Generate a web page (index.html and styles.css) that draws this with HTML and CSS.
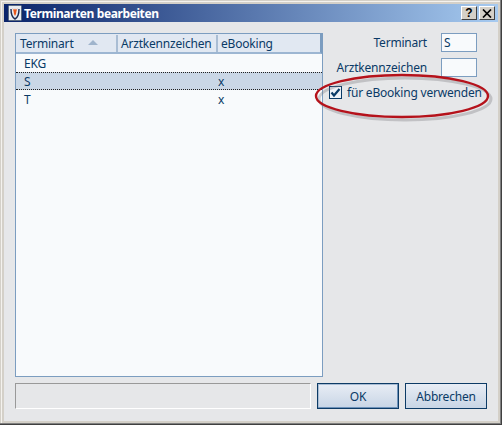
FILE: index.html
```html
<!DOCTYPE html>
<html>

<head>
    <meta charset="UTF-8">
    <title>Terminarten bearbeiten</title>
    <link rel="stylesheet" href="styles.css">
</head>

<body>
    <div class="window">
        <!-- Titelleiste -->
        <div class="titlebar">
            <svg class="app-icon" width="14" height="16" viewBox="0 0 14 16">
                <rect x="0.5" y="0.5" width="13" height="15" rx="1" fill="#e8ecf2" stroke="#5a6a80"/>
                <path d="M3 4 C3 11 5 13 7 14 C9 13 11 11 11 4" fill="none" stroke="#1a2a50" stroke-width="1.4"/>
                <path d="M4.5 3 L5.5 6 L6 9 L7 11 L8 9 L8.5 6 L9.5 3 L8 5 L7 3.5 L6 5 Z" fill="#e8581c"/>
            </svg>
            <span class="title">Terminarten bearbeiten</span>
            <button class="caption-btn">?</button>
            <button class="caption-btn caption-close">
                <svg width="10" height="9" viewBox="0 0 10 9">
                    <path d="M1 0.5 L9 8.5 M9 0.5 L1 8.5" stroke="#000" stroke-width="1.7" fill="none"/>
                </svg>
            </button>
        </div>

        <div class="content">
            <div class="main">
                <!-- Liste -->
                <div class="list">
                    <div class="row list-head">
                        <div class="col-art">Terminart <span class="sort-arrow"></span></div>
                        <div class="col-arzt">Arztkennzeichen</div>
                        <div class="col-book">eBooking</div>
                    </div>
                    <div class="row">
                        <div class="col-art cell">EKG</div>
                        <div class="col-arzt"></div>
                        <div class="col-book"></div>
                    </div>
                    <div class="row selected">
                        <div class="col-art cell">S</div>
                        <div class="col-arzt"></div>
                        <div class="col-book">x</div>
                    </div>
                    <div class="row">
                        <div class="col-art cell">T</div>
                        <div class="col-arzt"></div>
                        <div class="col-book">x</div>
                    </div>
                </div>

                <!-- Formular -->
                <div class="form">
                    <div class="form-row">
                        <label>Terminart</label>
                        <div class="field">S</div>
                    </div>
                    <div class="form-row">
                        <label>Arztkennzeichen</label>
                        <div class="field"></div>
                    </div>
                    <div class="check-row">
                        <span class="checkbox">
                            <svg width="11" height="11" viewBox="0 0 11 11">
                                <path d="M1.5 5.5 L4 8.5 L9.5 2" fill="none" stroke="#0a3a66" stroke-width="2.2"/>
                            </svg>
                        </span>
                        <span>für eBooking verwenden</span>
                    </div>
                </div>
            </div>

            <div class="footer">
                <div class="status"></div>
                <button class="btn btn-default">OK</button>
                <button class="btn">Abbrechen</button>
            </div>
        </div>

        <!-- Markierung -->
        <svg class="mark" width="190" height="60" viewBox="0 0 190 60">
            <ellipse cx="88" cy="26" rx="86" ry="21" fill="none" stroke="#7a7c80" stroke-opacity="0.35" stroke-width="3" transform="translate(3 3)"/>
            <ellipse cx="88" cy="26" rx="86" ry="21" fill="none" stroke="#b5121b" stroke-width="2.4"/>
        </svg>
    </div>
</body>

</html>
```

FILE: styles.css
```css
* {
    box-sizing: border-box;
}

body {
    margin: 0;
    font-family: "Noto Sans", sans-serif;
    font-size: 12px;
    letter-spacing: -0.2px;
    color: #0a3a66;
}

.window {
    position: relative;
    display: flex;
    flex-direction: column;
    width: 502px;
    height: 425px;
    padding: 4px;
    background-color: #d4d0c8;
    box-shadow: inset -1px -1px 0 #404040, inset -2px -2px 0 #808080, inset 1px 1px 0 #d4d0c8, inset 2px 2px 0 #f4f2ee;
}

.titlebar {
    display: flex;
    align-items: center;
    height: 18px;
    padding: 0 3px 0 4px;
    background: linear-gradient(to right, #0a246a, #a6caf0);
}

.app-icon {
    margin-right: 2px;
}

.title {
    flex: 1;
    font-size: 12px;
    font-weight: bold;
    letter-spacing: -0.4px;
    color: #fff;
}

.caption-btn {
    display: flex;
    align-items: center;
    justify-content: center;
    width: 16px;
    height: 14px;
    padding: 0;
    border: 1px solid #404040;
    border-top-color: #fff;
    border-left-color: #fff;
    background-color: #d4d0c8;
    font-family: "Liberation Sans", sans-serif;
    font-size: 12px;
    font-weight: bold;
    color: #000;
}

.caption-close {
    margin-left: 2px;
}

.content {
    display: flex;
    flex-direction: column;
    flex: 1;
    padding: 11px 11px 12px;
    background-color: #e6e7e9;
}

.main {
    display: flex;
    flex: 1;
}

.list {
    flex-shrink: 0;
    width: 308px;
    height: 344px;
    border: 1px solid #7c9dc0;
    background-color: #f8fafc;
}

.row {
    display: flex;
    align-items: center;
    height: 18px;
    border-top: 1px dotted transparent;
    border-bottom: 1px dotted transparent;
}

.list-head {
    height: 20px;
    border: 0;
    border-right: 2px solid #7c9dc0;
    border-bottom: 2px solid #9db6d2;
    background-color: #e1e8f2;
}

.list-head .col-art {
    width: 100px;
}

.list-head .col-arzt,
.list-head .col-book {
    padding-left: 3px;
    border-left: 2px solid #a9bdd4;
}

.selected {
    border-color: #222;
    background-color: #cad7e6;
}

.col-art {
    position: relative;
    width: 101px;
    padding-left: 4px;
}

.cell {
    padding-left: 8px;
}

.col-arzt {
    width: 100px;
}

.row:not(.list-head) .col-book {
    padding-left: 1px;
}

.sort-arrow {
    position: absolute;
    left: 72px;
    top: 5px;
    width: 0;
    height: 0;
    border-left: 5px solid transparent;
    border-right: 5px solid transparent;
    border-bottom: 5px solid #9fb4cc;
}

.form {
    flex: 1;
    padding: 0 10px 0 6px;
}

.form-row {
    display: flex;
    align-items: center;
    justify-content: flex-end;
    width: 148px;
    height: 19px;
    margin-bottom: 6px;
}

.form-row label {
    margin-right: 14px;
}

.field {
    width: 36px;
    height: 19px;
    padding-left: 2px;
    border: 1px solid #7c9dc0;
    background-color: #f8fafc;
    line-height: 17px;
}

.check-row {
    display: flex;
    align-items: center;
    height: 14px;
    margin-top: 8px;
    white-space: nowrap;
}

.checkbox {
    display: flex;
    align-items: center;
    justify-content: center;
    width: 13px;
    height: 13px;
    margin-right: 5px;
    border: 1px solid #0a3a66;
    background-color: #eef2f7;
}

.footer {
    display: flex;
    gap: 6px;
    height: 26px;
}

.status {
    flex: 1;
    border: 1px solid #fff;
    border-top-color: #999;
    border-left-color: #999;
}

.btn {
    width: 82px;
    padding: 0;
    border: 1px solid #0d3b66;
    background: linear-gradient(to bottom, #e8edf5, #c8d5e5);
    font-family: "Noto Sans", sans-serif;
    font-size: 12px;
    letter-spacing: -0.2px;
    color: #0a3a66;
}

.btn-default {
    box-shadow: inset -1px -1px 0 #6f93ba, inset 1px 1px 0 #a9bdd4;
}

.mark {
    position: absolute;
    left: 314px;
    top: 70px;
}
```
